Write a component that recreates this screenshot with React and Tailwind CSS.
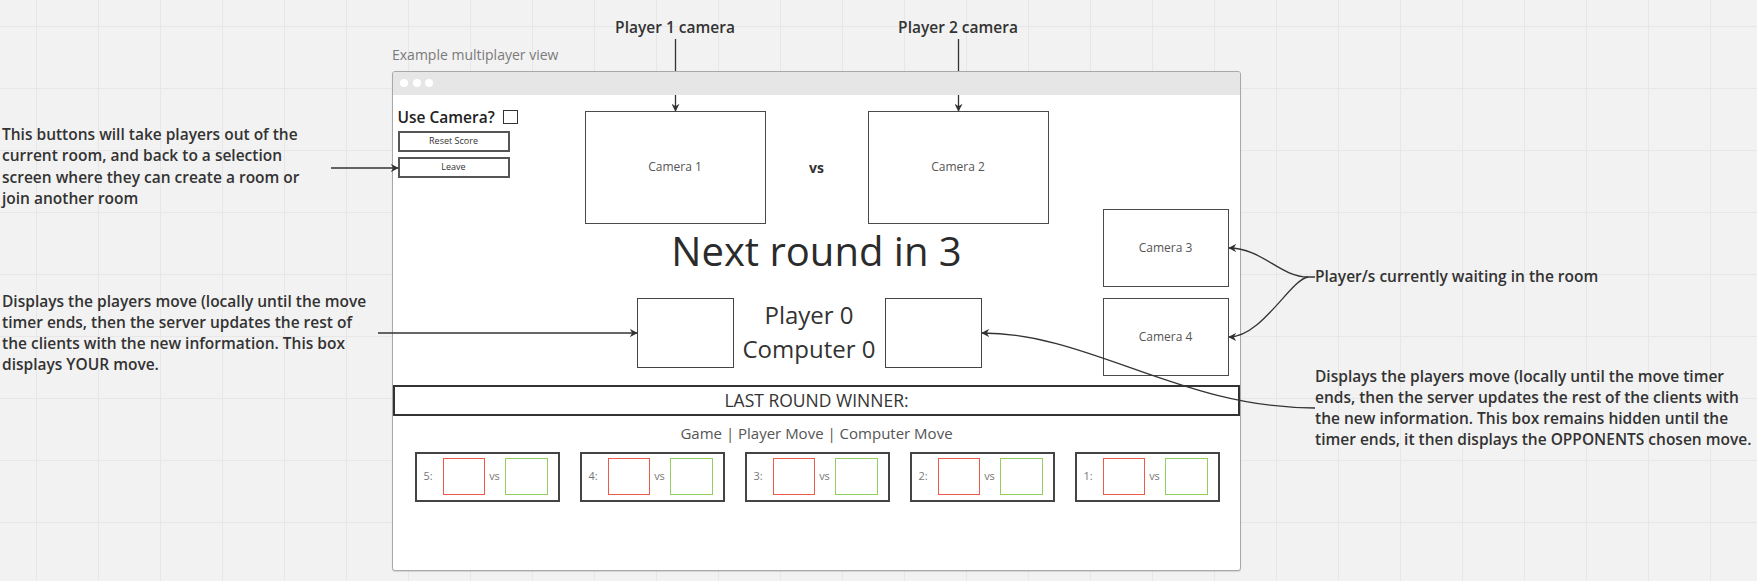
import React from 'react';

const FONT = "font-['Open_Sans',sans-serif]";

const HISTORY = [5, 4, 3, 2, 1];

function CameraBox({ label, className }) {
  return (
    <div className={`flex items-center justify-center border-[1.5px] border-[#4a4a4a] bg-white text-[12px] text-[#555] ${className}`}>
      {label}
    </div>
  );
}

function HistoryCard({ game }) {
  return (
    <div className="flex h-[50px] w-[145px] items-center border-2 border-[#444] pl-[7px] text-[11px] text-[#777]">
      <span className="w-[19px]">{game}:</span>
      <div className="h-[37px] w-[42px] border-[1.5px] border-[#ec5b47]" />
      <span className="w-[20px] text-center">vs</span>
      <div className="h-[37px] w-[43px] border-[1.5px] border-[#93cf5e]" />
    </div>
  );
}

function Arrows() {
  return (
    <svg className="pointer-events-none absolute left-0 top-0 z-10" width="1757" height="581" fill="none">
      <defs>
        <marker id="head" viewBox="0 0 10 10" markerWidth="8" markerHeight="8" refX="9" refY="5" orient="auto" markerUnits="userSpaceOnUse">
          <path d="M0,0 L10,5 L0,10 L3,5 Z" fill="#333" />
        </marker>
      </defs>
      <g stroke="#333" strokeWidth="1.3">
        {/* player camera labels */}
        <path d="M675.5 39 V71" />
        <path d="M675.5 95 V111" markerEnd="url(#head)" />
        <path d="M958.5 39 V71" />
        <path d="M958.5 95 V111" markerEnd="url(#head)" />
        {/* left notes */}
        <path d="M331 168 H398" markerEnd="url(#head)" />
        <path d="M378 333 H637" markerEnd="url(#head)" />
        {/* waiting players */}
        <path d="M1315 277 H1308 C1280 277 1262 248 1229 248" markerEnd="url(#head)" />
        <path d="M1308 277 C1290 280 1262 337 1229 337" markerEnd="url(#head)" />
        {/* opponent move */}
        <path d="M1315 408 C1180 408 1090 333 982 333" markerEnd="url(#head)" />
      </g>
    </svg>
  );
}

export default function App() {
  return (
    <div
      className={`${FONT} relative h-[581px] w-[1757px] overflow-hidden bg-[#f2f2f2] bg-[linear-gradient(to_right,#e7e7e7_1px,transparent_1px),linear-gradient(to_bottom,#e7e7e7_1px,transparent_1px)] bg-[length:62px_62px] bg-[position:36px_26px] text-[#333]`}
    >
      {/* notes on the board */}
      <p className="absolute left-[575px] top-[17px] w-[200px] text-center text-[15.5px] font-semibold leading-5">Player 1 camera</p>
      <p className="absolute left-[858px] top-[17px] w-[200px] text-center text-[15.5px] font-semibold leading-5">Player 2 camera</p>
      <p className="absolute left-[392px] top-[45px] text-[14px] leading-5 text-[#7a7a7a]">Example multiplayer view</p>

      <p className="absolute left-[2px] top-[124px] whitespace-nowrap text-[15.5px] font-semibold leading-[21.3px]">
        This buttons will take players out of the
        <br />
        current room, and back to a selection
        <br />
        screen where they can create a room or
        <br />
        join another room
      </p>

      <p className="absolute left-[2px] top-[291px] whitespace-nowrap text-[15.5px] font-semibold leading-[21.1px]">
        Displays the players move (locally until the move
        <br />
        timer ends, then the server updates the rest of
        <br />
        the clients with the new information. This box
        <br />
        displays YOUR move.
      </p>

      <p className="absolute left-[1315px] top-[266px] whitespace-nowrap text-[15.5px] font-semibold leading-[21.3px]">
        Player/s currently waiting in the room
      </p>

      <p className="absolute left-[1315px] top-[366px] whitespace-nowrap text-[15.5px] font-semibold leading-[21.1px]">
        Displays the players move (locally until the move timer
        <br />
        ends, then the server updates the rest of the clients with
        <br />
        the new information. This box remains hidden until the
        <br />
        timer ends, it then displays the OPPONENTS chosen move.
      </p>

      {/* browser window mockup */}
      <div className="absolute left-[392px] top-[71px] flex h-[500px] w-[849px] flex-col overflow-hidden rounded-[3px] border-[1.5px] border-[#a8a8a8] bg-white shadow-[0_1px_1px_rgba(0,0,0,0.12)]">
        <div className="flex h-[22.5px] items-center gap-[4.5px] bg-[#e6e6e6] pl-[7px]">
          <span className="h-2 w-2 rounded-full bg-white" />
          <span className="h-2 w-2 rounded-full bg-white" />
          <span className="h-2 w-2 rounded-full bg-white" />
        </div>

        <div className="flex h-[290px]">
          {/* controls */}
          <div className="w-[191.5px] pl-[4.5px] pt-3">
            <div className="flex h-5 items-center">
              <span className="text-[15.5px] font-semibold leading-5 text-[#222]">Use Camera?</span>
              <span className="ml-2 h-[14px] w-[15px] border-[1.5px] border-[#333]" />
            </div>
            <button className="mt-1 flex h-[21px] w-[112px] items-center justify-center border-2 border-[#555] text-[9px] text-[#333]">
              Reset Score
            </button>
            <button className="mt-[5px] flex h-[21px] w-[112px] items-center justify-center border-2 border-[#555] text-[9px] text-[#333]">
              Leave
            </button>
          </div>

          {/* main stage */}
          <div className="w-[464px]">
            <div className="mt-4 flex items-center justify-between">
              <CameraBox label="Camera 1" className="h-[113px] w-[181px]" />
              <span className="text-[14px] font-bold text-[#333]">vs</span>
              <CameraBox label="Camera 2" className="h-[113px] w-[181px]" />
            </div>
            <p className="mt-[7.5px] text-center text-[40px] leading-[40px] text-[#2b2b2b]">Next round in 3</p>
            <div className="mt-[26.5px] flex items-start pl-[52px]">
              <div className="h-[70px] w-[97px] border-[1.5px] border-[#444]" />
              <div className="w-[151px] text-center text-[24px] leading-[34px] text-[#333]">
                <p>Player 0</p>
                <p>Computer 0</p>
              </div>
              <div className="h-[70px] w-[97px] border-[1.5px] border-[#444]" />
            </div>
          </div>

          {/* waiting players */}
          <div className="flex flex-1 flex-col items-end gap-[11px] pr-[11.5px] pt-[114px]">
            <CameraBox label="Camera 3" className="h-[78px] w-[126px]" />
            <CameraBox label="Camera 4" className="h-[78px] w-[126px]" />
          </div>
        </div>

        <div className="flex h-[31px] items-center justify-center border-2 border-[#333] text-[17.5px] text-[#333]">
          LAST ROUND WINNER:
        </div>

        <p className="mt-[7.5px] text-center text-[15px] leading-5 text-[#555]">Game | Player Move | Computer Move</p>

        <div className="mt-[8.5px] flex justify-center gap-5 pl-[1px]">
          {HISTORY.map((g) => (
            <HistoryCard key={g} game={g} />
          ))}
        </div>
      </div>

      <Arrows />
    </div>
  );
}
